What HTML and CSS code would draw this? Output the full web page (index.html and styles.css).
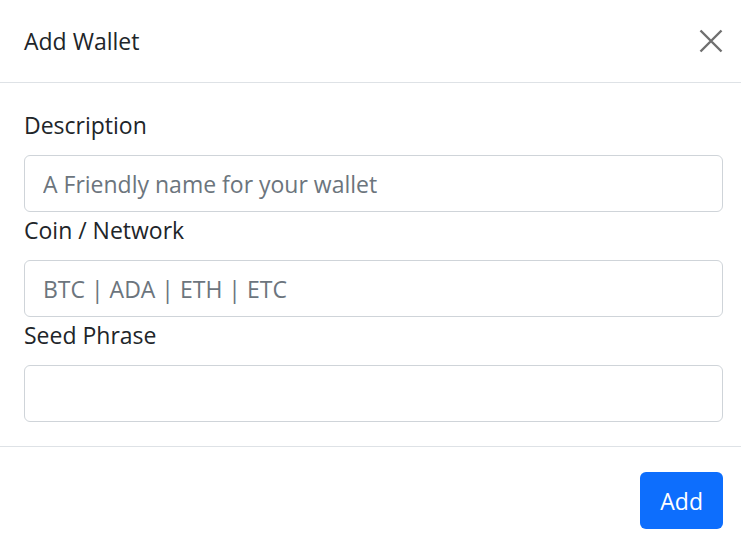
FILE: index.html
```html
<!DOCTYPE html>
<html lang="en">
<head>
<meta charset="utf-8">
<title>Add Wallet</title>
<link rel="stylesheet" href="styles.css">
</head>
<body>
<div class="modal">
  <div class="modal-header">
    <h5 class="modal-title">Add Wallet</h5>
    <button class="btn-close" type="button" aria-label="Close">
      <svg viewBox="0 0 16 16" width="24" height="24"><path d="M1 1L15 15M15 1L1 15" stroke="#6f6f6f" stroke-width="1.6" fill="none"/></svg>
    </button>
  </div>
  <div class="modal-body">
    <label class="form-label" for="desc">Description</label>
    <input class="form-control" id="desc" type="text" placeholder="A Friendly name for your wallet">
    <label class="form-label" for="coin">Coin / Network</label>
    <input class="form-control" id="coin" type="text" placeholder="BTC | ADA | ETH | ETC">
    <label class="form-label" for="seed">Seed Phrase</label>
    <input class="form-control" id="seed" type="text">
  </div>
  <div class="modal-footer">
    <button class="btn-primary" type="button">Add</button>
  </div>
</div>
</body>
</html>
```
FILE: styles.css
```css
html, body {
  margin: 0;
  padding: 0;
  background: #ffffff;
}
body {
  font-family: "Open Sans", "Noto Sans", sans-serif;
  font-size: 23px;
  line-height: 36px;
  color: #212529;
}
.modal {
  width: 741px;
  display: flex;
  flex-direction: column;
}
.modal-header {
  height: 83px;
  box-sizing: border-box;
  display: flex;
  align-items: center;
  justify-content: space-between;
  padding: 0 18px 0 24px;
  border-bottom: 1px solid #dee2e6;
}
.modal-title {
  margin: 0;
  font-size: 23px;
  font-weight: 400;
  line-height: 36px;
}
.btn-close {
  border: 0;
  background: transparent;
  padding: 0;
  width: 24px;
  height: 24px;
  display: flex;
}
.modal-body {
  padding: 24px 18px 24px 24px;
  display: flex;
  flex-direction: column;
}
.form-label {
  display: block;
  height: 36px;
  margin-bottom: 12px;
}
.form-control {
  box-sizing: border-box;
  height: 57px;
  width: 100%;
  border: 1px solid #cfd4d9;
  border-radius: 6px;
  padding: 0 18px;
  font-family: inherit;
  font-size: 23px;
  color: #212529;
  background: #fff;
  outline: none;
}
.form-control::placeholder {
  color: #6c757d;
}
.modal-footer {
  border-top: 1px solid #dee2e6;
  display: flex;
  justify-content: flex-end;
  padding: 25px 18px 0 0;
}
.btn-primary {
  box-sizing: border-box;
  height: 57px;
  padding: 0 20px;
  border: 0;
  border-radius: 6px;
  background: #0d6efd;
  color: #fff;
  font-family: inherit;
  font-size: 23px;
}
```
